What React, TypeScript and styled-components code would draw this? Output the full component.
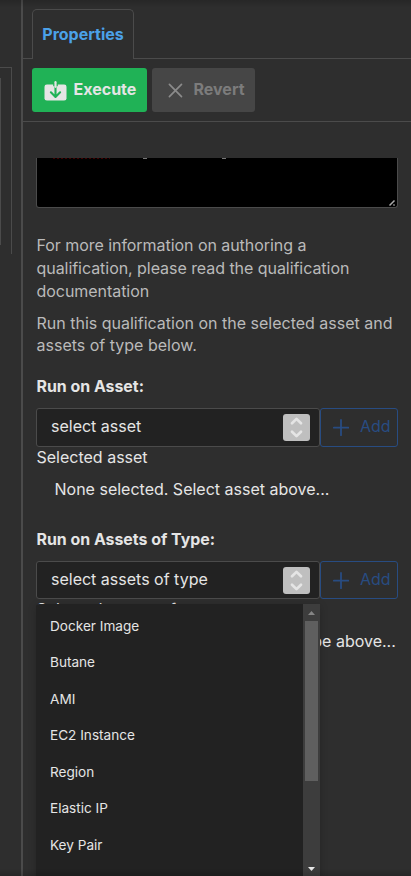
import React from "react";
import styled, { createGlobalStyle } from "styled-components";

const GlobalStyle = createGlobalStyle`
  * { box-sizing: border-box; }
  html, body { margin: 0; background: #2e2e2e; overflow: hidden; }
  body { font-family: Inter, "Liberation Sans", sans-serif; color: #e5e5e5; font-size: 16px; }
  p, h3, ul { margin: 0; padding: 0; }
  button { font: inherit; margin: 0; }
`;

const Screen = styled.div`
  position: relative;
  display: flex;
  width: 411px;
  height: 876px;
  overflow: hidden;
  background: #2e2e2e;
`;

const EdgeShade = styled.div<{ $bottom?: boolean }>`
  position: absolute;
  left: 0;
  right: 0;
  ${(p) => (p.$bottom ? "bottom: 0;" : "top: 0;")}
  height: 8px;
  pointer-events: none;
  z-index: 5;
  background: linear-gradient(${(p) => (p.$bottom ? "to top" : "to bottom")}, rgba(0, 0, 0, 0.16), rgba(0, 0, 0, 0));
`;

const Canvas = styled.div`
  width: 21px;
  flex: none;
  padding-top: 67px;
`;

const OuterFrame = styled.div`
  width: 12px;
  height: 187px;
  padding-top: 10px;
  border-top: 1px solid #4b4b4b;
  border-right: 1px solid #4b4b4b;
`;

const InnerFrame = styled.div`
  width: 1px;
  height: 167px;
  background: #4b4b4b;
`;

const Panel = styled.section`
  flex: 1;
  min-width: 0;
  border-left: 2px solid #4b4b4b;
`;

const TabBar = styled.div`
  display: flex;
  height: 59px;
  padding-top: 9px;
`;

const TabRule = styled.div<{ $width?: number }>`
  ${(p) => (p.$width ? `width: ${p.$width}px;` : "flex: 1;")}
  border-bottom: 1px solid #4b4b4b;
`;

const Tab = styled.div`
  width: 102px;
  border: 1px solid #4b4b4b;
  border-bottom: 0;
  border-radius: 5px 5px 0 0;
  color: #4ba1e8;
  font-size: 16px;
  font-weight: 700;
  line-height: 48px;
  text-align: center;
  white-space: nowrap;
`;

const Toolbar = styled.div`
  display: flex;
  gap: 5px;
  height: 63px;
  padding: 9px 0 0 9px;
  border-bottom: 1px solid #4b4b4b;
`;

const ToolButton = styled.button<{ $primary?: boolean }>`
  display: flex;
  align-items: center;
  width: ${(p) => (p.$primary ? 115 : 103)}px;
  height: 44px;
  padding: 0 0 1px ${(p) => (p.$primary ? 11 : 12)}px;
  gap: ${(p) => (p.$primary ? 6.5 : 5.5)}px;
  border: 0;
  border-radius: 3px;
  background: ${(p) => (p.$primary ? "#20b256" : "#464646")};
  color: ${(p) => (p.$primary ? "#e5e5e5" : "#7c7c7c")};
  font-weight: 700;
  white-space: nowrap;
`;

const ToolLabel = styled.span`
  padding-bottom: 1.5px;
`;

const Scroller = styled.div`
  height: 718px;
  margin-top: 36px;
  padding-left: 13px;
  overflow: hidden;
`;

const Editor = styled.div`
  position: relative;
  width: 362px;
  height: 50px;
  border: 1px solid #4b4b4b;
  border-top: 0;
  border-radius: 0 0 3px 3px;
  background: #000;
`;

const EditorDetail = styled.svg`
  position: absolute;
  left: -1px;
  top: 0;
`;

const Paragraph = styled.p<{ $top: number; $line: number; $tight?: boolean }>`
  margin-top: ${(p) => p.$top}px;
  padding-left: 0.5px;
  line-height: ${(p) => p.$line}px;
  letter-spacing: ${(p) => (p.$tight ? "-0.05px" : "normal")};
  color: #bababa;
  white-space: nowrap;
`;

const Heading = styled.h3<{ $top: number }>`
  margin-top: ${(p) => p.$top}px;
  padding-left: 0.5px;
  height: 22px;
  font-size: 15.9px;
  font-weight: 700;
  line-height: 23px;
  white-space: nowrap;
`;

const FieldRow = styled.div<{ $height: number }>`
  position: relative;
  display: flex;
  width: 362px;
  height: ${(p) => p.$height}px;
  margin-top: 11px;
`;

const SelectBox = styled.div`
  display: flex;
  align-items: center;
  justify-content: space-between;
  width: 284px;
  padding: 0 9px 0 14px;
  border: 1px solid #4b4b4b;
  border-radius: 3px;
  background: #222;
  white-space: nowrap;
`;

const SelectLabel = styled.span`
  padding-bottom: 2.5px;
`;

const AddButton = styled.button`
  display: flex;
  align-items: center;
  width: 78px;
  padding: 0 0 0 12px;
  gap: 11px;
  border: 1px solid #284c82;
  border-radius: 3px;
  background: transparent;
  color: #284c82;
`;

const AddLabel = styled.span`
  padding-bottom: 2.5px;
`;

const Caption = styled.p`
  height: 21px;
  padding-left: 0.5px;
  line-height: 21px;
  white-space: nowrap;
`;

const EmptyNote = styled.p`
  height: 22px;
  margin: 10px 0 0 18.5px;
  line-height: 22px;
  white-space: nowrap;
`;

const Menu = styled.div`
  position: absolute;
  left: 0;
  top: 43px;
  display: flex;
  width: 284px;
  height: 290px;
  border-radius: 3px 0 0 0;
  background: #222;
  box-shadow: 0 2px 8px rgba(0, 0, 0, 0.2);
`;

const MenuList = styled.ul`
  flex: 1;
  padding-top: 3.7px;
  list-style: none;
`;

const MenuItem = styled.li`
  height: 36.5px;
  padding-left: 14px;
  font-size: 13.6px;
  line-height: 36.5px;
`;

const ScrollTrack = styled.div`
  display: flex;
  flex-direction: column;
  align-items: center;
  width: 17px;
  height: 272px;
  background: #3d3d3d;
`;

const ScrollThumb = styled.div`
  width: 13px;
  height: 160px;
  margin-bottom: 79px;
  background: #5f5f5f;
`;

const Arrow = styled.svg`
  display: block;
  flex: none;
`;

const SelectorIcon = () => (
  <svg width="27" height="27" viewBox="0 0 27 27">
    <rect width="27" height="27" rx="3" fill="#bfbfbf" />
    <path d="M9 9.3 13.5 4.9 18 9.3M9 17.7l4.5 4.4 4.5-4.4" fill="none" stroke="#e5e5e5" strokeWidth="2.7" strokeLinecap="round" strokeLinejoin="round" />
  </svg>
);

const PlusIcon = () => (
  <svg width="16" height="17" viewBox="0 0 16 17">
    <path d="M8 1v15.2M.8 8.7h14.6" stroke="#284c82" strokeWidth="1.8" strokeLinecap="round" />
  </svg>
);

const ExecuteIcon = () => (
  <svg width="24" height="24" viewBox="0 0 24 24">
    <rect x="1.5" y="6.5" width="22" height="16" rx="2.3" fill="#e5e5e5" />
    <path d="M12.5 8.5v9.5M7.9 14.3l4.6 4.6 4.6-4.6" fill="none" stroke="#20b256" strokeWidth="2.1" strokeLinecap="round" strokeLinejoin="round" />
    <path d="M10.2 6h4.6v2.3h-4.6z" fill="#20b256" />
    <path d="M12.5 4.2v4.6" stroke="#e5e5e5" strokeWidth="2.2" strokeLinecap="round" />
  </svg>
);

const RevertIcon = () => (
  <svg width="24" height="24" viewBox="0 0 24 24">
    <path d="M5.4 6.3 17.5 18.6M17.5 6.3 5.4 18.6" stroke="#8b8b8b" strokeWidth="1.7" strokeLinecap="round" />
  </svg>
);

const assetTypes = ["Docker Image", "Butane", "AMI", "EC2 Instance", "Region", "Elastic IP", "Key Pair"];

const AssetPicker = ({ label, height, children }: { label: string; height: number; children?: React.ReactNode }) => (
  <FieldRow $height={height}>
    <SelectBox>
      <SelectLabel>{label}</SelectLabel>
      <SelectorIcon />
    </SelectBox>
    <AddButton>
      <PlusIcon />
      <AddLabel>Add</AddLabel>
    </AddButton>
    {children}
  </FieldRow>
);

export default function App() {
  return (
    <>
      <GlobalStyle />
      <Screen>
        <Canvas>
          <OuterFrame>
            <InnerFrame />
          </OuterFrame>
        </Canvas>
        <Panel>
          <TabBar>
            <TabRule $width={9} />
            <Tab>Properties</Tab>
            <TabRule />
          </TabBar>
          <Toolbar>
            <ToolButton $primary>
              <ExecuteIcon />
              <ToolLabel>Execute</ToolLabel>
            </ToolButton>
            <ToolButton>
              <RevertIcon />
              <ToolLabel>Revert</ToolLabel>
            </ToolButton>
          </Toolbar>
          <Scroller>
            <Editor>
              <EditorDetail width="362" height="50">
                <path d="M17 .5h57" stroke="#400000" strokeWidth="1" strokeDasharray="2 2" />
                <path d="M107 .5h4M186 .5h4" stroke="#777" strokeWidth="1" />
                <path d="M353.5 47.5l5-5M357.5 47.5l1-1" stroke="#aaa" strokeWidth="1.5" />
              </EditorDetail>
            </Editor>
            <Paragraph $top={26} $line={23} $tight>
              For more information on authoring a<br />
              qualification, please read the qualification<br />
              documentation
            </Paragraph>
            <Paragraph $top={9} $line={22}>
              Run this qualification on the selected asset and<br />
              assets of type below.
            </Paragraph>
            <Heading $top={19}>Run on Asset:</Heading>
            <AssetPicker label="select asset" height={39} />
            <Caption>Selected asset</Caption>
            <EmptyNote>None selected. Select asset above...</EmptyNote>
            <Heading $top={28}>Run on Assets of Type:</Heading>
            <AssetPicker label="select assets of type" height={38}>
              <Menu>
                <MenuList>
                  {assetTypes.map((name) => (
                    <MenuItem key={name}>{name}</MenuItem>
                  ))}
                </MenuList>
                <ScrollTrack>
                  <Arrow width="17" height="17">
                    <path d="M5 11h7L8.5 7z" fill="#858585" />
                  </Arrow>
                  <ScrollThumb />
                  <Arrow width="17" height="16">
                    <path d="M5 7h7L8.5 11z" fill="#e8e8e8" />
                  </Arrow>
                </ScrollTrack>
              </Menu>
            </AssetPicker>
            <Caption>Selected assets of type</Caption>
            <EmptyNote>None selected. Select assets of type above...</EmptyNote>
          </Scroller>
        </Panel>
        <EdgeShade />
        <EdgeShade $bottom />
      </Screen>
    </>
  );
}
